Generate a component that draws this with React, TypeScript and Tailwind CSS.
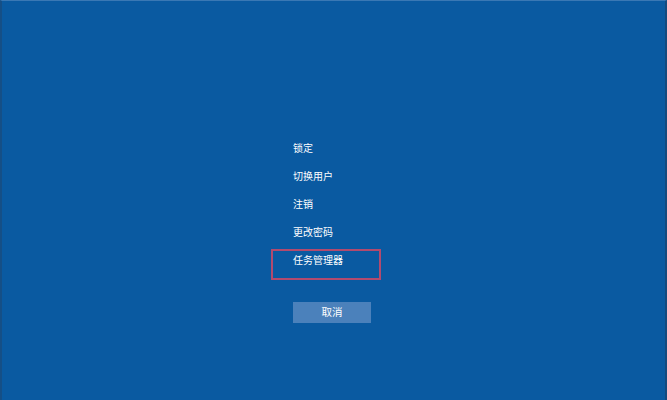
const items = ["锁定", "切换用户", "注销", "更改密码", "任务管理器"];

export default function App() {
  return (
    <div
      className="flex h-[400px] w-[667px] justify-center overflow-hidden border-l-2 border-r-2 border-t border-l-[#154f86] border-r-[#134a7e] border-t-[#3a78b4] bg-[#0a5aa1] text-white"
      style={{ fontFamily: '"Noto Sans CJK SC", "Noto Sans", sans-serif' }}
    >
      <div className="flex w-[78px] flex-col pt-[133px] ml-[-3px]">
        {items.map((label, i) => (
          <div key={label} className="relative flex h-[28px] items-center text-[10px] leading-none">
            {i === items.length - 1 && (
              <div className="absolute left-[-22px] top-[3px] h-[31px] w-[110px] border-2 border-[#b24a6e]" />
            )}
            <span className="relative">{label}</span>
          </div>
        ))}
        <button className="mt-[28px] flex h-[21px] w-[78px] items-center justify-center bg-[#4b81bb] text-[10.5px] leading-none text-white">
          取消
        </button>
      </div>
    </div>
  );
}
